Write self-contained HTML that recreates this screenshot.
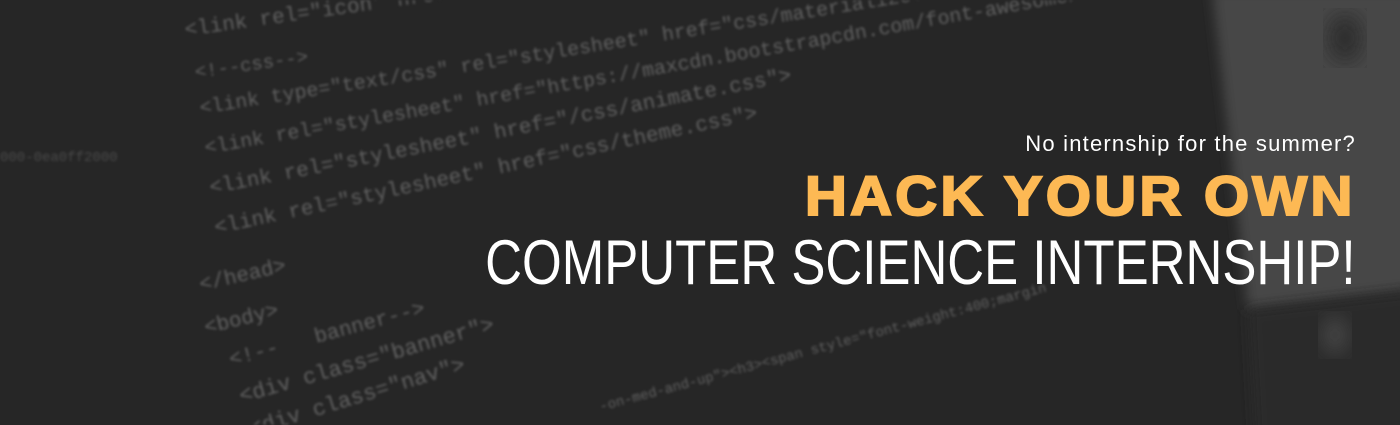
<!DOCTYPE html>
<html><head><meta charset="utf-8"><style>
html,body{margin:0;padding:0}
body{width:1400px;height:425px;overflow:hidden;background:#262626;position:relative;font-family:"Liberation Sans",sans-serif}
.code{position:absolute;left:0;top:0;width:1400px;height:425px;filter:blur(1.4px);overflow:hidden}
.code div{position:absolute;white-space:pre;font-family:"Liberation Mono",monospace;color:#626262;transform-origin:left center}
.t{position:absolute;right:44px;text-align:right;white-space:nowrap;transform-origin:right top}
</style></head><body>
<svg width="1400" height="425" style="position:absolute;left:0;top:0">
<defs><filter id="b"><feGaussianBlur stdDeviation="6"/></filter><filter id="b2"><feGaussianBlur stdDeviation="10"/></filter></defs>
<polygon points="1212,-10 1420,-10 1420,290 1248,310" fill="#474747" filter="url(#b)"/>
<polygon points="1248,310 1420,290 1420,440 1255,440" fill="#2c2c2c" filter="url(#b)"/>
<ellipse cx="1345" cy="38" rx="18" ry="25" fill="#2e2e2e" filter="url(#b2)"/>
<ellipse cx="1335" cy="335" rx="14" ry="20" fill="#444" filter="url(#b2)"/>
</svg>
<div class="code">
<div style="left:185px;top:20px;font-size:21px;transform:rotate(-8deg)">&lt;link rel="icon" href="/favicon.ico" type="image/</div>
<div style="left:195px;top:62px;font-size:19px;transform:rotate(-8deg)">&lt;!--css--&gt;</div>
<div style="left:200px;top:98px;font-size:20px;transform:rotate(-9deg)">&lt;link type="text/css" rel="stylesheet" href="css/materialize.min.css" media="screen,projection"</div>
<div style="left:205px;top:138px;font-size:20px;transform:rotate(-10deg)">&lt;link rel="stylesheet" href="https://maxcdn.bootstrapcdn.com/font-awesome/4.4.0/css/font-awesome.min.css"</div>
<div style="left:210px;top:178px;font-size:21px;transform:rotate(-11deg)">&lt;link rel="stylesheet" href="/css/animate.css"&gt;</div>
<div style="left:215px;top:218px;font-size:21px;transform:rotate(-12deg)">&lt;link rel="stylesheet" href="css/theme.css"&gt;</div>
<div style="left:200px;top:275px;font-size:21px;transform:rotate(-13deg)">&lt;/head&gt;</div>
<div style="left:205px;top:318px;font-size:21px;transform:rotate(-14deg)">&lt;body&gt;</div>
<div style="left:230px;top:350px;font-size:21px;transform:rotate(-15deg)">&lt;!--   banner--&gt;</div>
<div style="left:240px;top:385px;font-size:22px;transform:rotate(-16deg)">&lt;div class="banner"&gt;</div>
<div style="left:250px;top:418px;font-size:22px;transform:rotate(-17deg)">&lt;div class="nav"&gt;</div>
<div style="left:600px;top:400px;font-size:14px;transform:rotate(-15deg)">-on-med-and-up"&gt;&lt;h3&gt;&lt;span style="font-weight:400;margin</div>
<div style="left:0px;top:150px;font-size:14px;color:#4a4a4a">000-0ea0ff2000</div>
</div>
<div class="t" style="top:131px;font-size:22px;color:#fff;letter-spacing:1.2px">No internship for the summer?</div>
<div class="t" style="top:163px;font-size:56px;font-weight:bold;color:#fdb954;letter-spacing:3px;-webkit-text-stroke:2px #fdb954;transform:scaleX(1.04)">HACK YOUR OWN</div>
<div class="t" style="top:227px;font-size:63px;color:#fff;transform:scaleX(0.81)">COMPUTER SCIENCE INTERNSHIP!</div>
</body></html>
